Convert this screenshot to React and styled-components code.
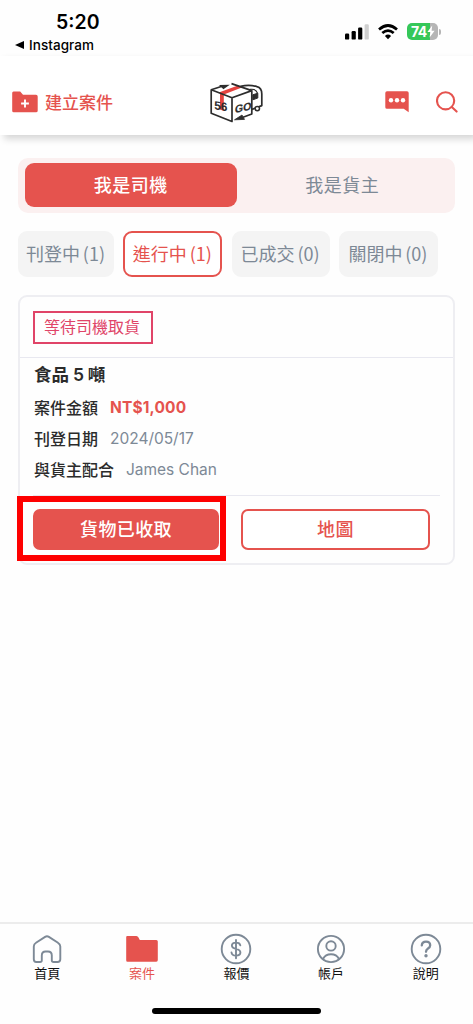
import React from 'react';
import styled, { createGlobalStyle } from 'styled-components';

const RED = '#e5534e';
const GREY = '#7d8996';

const tabs = [
  { label: '首頁', icon: 'home' },
  { label: '案件', icon: 'folder', active: true },
  { label: '報價', icon: 'dollar' },
  { label: '帳戶', icon: 'user' },
  { label: '說明', icon: 'help' },
];

const filters = [
  { label: '刊登中 (1)', width: 96 },
  { label: '進行中 (1)', width: 99, active: true },
  { label: '已成交 (0)', width: 98 },
  { label: '關閉中 (0)', width: 99 },
];

const details = [
  { label: '案件金額', value: 'NT$1,000', strong: true },
  { label: '刊登日期', value: '2024/05/17' },
  { label: '與貨主配合', value: 'James Chan' },
];

const Logo = () => (
  <svg width="74" height="60" viewBox="0 0 74 60" fill="none" stroke="#2d2d2d" strokeWidth="1.7" strokeLinejoin="round">
    <path d="M18.8 20.6 38 13.6 42.5 15.2 23.8 22.4V39L20 37.4V21.2Z" fill="#e5433f" stroke="none" />
    <path d="M11.2 17.8 32 25.8V49.5L11.2 41.2ZM32 25.8 51.8 18.6V42L43 45.3M11.2 17.8 22 14.2M31.5 11.6 51.8 18.6" />
    <path d="M19 13 29.8 12.7 23.4 17.2Z" fill="#2d2d2d" stroke="none" />
    <path d="M34.5 47.8 42 43 44.5 47.4Z" fill="#2d2d2d" strokeWidth="0.8" />
    <path d="M40.5 14.4Q49 12.2 57 14.6 61.8 15.8 61.8 22V33.6L52 37.4" />
    <path d="M50 17.4Q56 16.4 57.6 21.4" strokeWidth="1.2" />
    <path d="M52.8 22.8 57.8 21.2V26L52.8 27.8Z" fill="#2d2d2d" strokeWidth="1" />
    <circle cx="57.3" cy="36.6" r="2.2" fill="#fff" strokeWidth="1.5" />
    <text transform="matrix(1 .16 0 1 14.2 37.2)" fontFamily="Liberation Sans, sans-serif" fontSize="12" fontWeight="700" fill="#2d2d2d" stroke="none">56</text>
    <text transform="matrix(1 -.2 -.12 1 34.6 41)" fontFamily="Liberation Sans, sans-serif" fontSize="11" fontWeight="700" fill="#2d2d2d" stroke="#2d2d2d" strokeWidth=".2" textLength="16.5" lengthAdjust="spacingAndGlyphs">GO</text>
  </svg>
);

const FolderPlus = () => (
  <svg width="26" height="22" viewBox="0 0 26 22">
    <path d="M1.5.5H8.2L11 3.8H24Q25.7 3.8 25.7 5.5V19.8Q25.7 21.3 24 21.3H1.7Q.2 21.3.2 19.8V2Q.2.5 1.5.5Z" fill={RED} />
    <path d="M13 8.6V16.4M9.1 12.5H16.9" stroke="#fff" strokeWidth="1.9" />
  </svg>
);

const ChatIcon = () => (
  <svg width="24" height="22" viewBox="0 0 24 22">
    <path d="M2 .3H22Q23.7.3 23.7 2V21.3L18.7 17.8H2Q.3 17.8.3 16.2V2Q.3.3 2 .3Z" fill={RED} />
    <circle cx="6" cy="9.3" r="2.2" fill="#fff" />
    <circle cx="12" cy="9.3" r="2.2" fill="#fff" />
    <circle cx="18" cy="9.3" r="2.2" fill="#fff" />
  </svg>
);

const SearchIcon = () => (
  <svg width="22" height="22" viewBox="0 0 22 22" fill="none" stroke={RED} strokeWidth="2.1" strokeLinecap="round">
    <circle cx="9.6" cy="9.8" r="8.6" />
    <path d="M15.8 16 20.6 20.6" />
  </svg>
);

const SignalIcon = () => (
  <svg width="24" height="16" viewBox="0 0 24 16">
    <rect x="0" y="9.6" width="4.2" height="6" rx="1.2" />
    <rect x="6.6" y="7" width="4.2" height="8.6" rx="1.2" />
    <rect x="13.1" y="3.6" width="4.2" height="12" rx="1.2" />
    <rect x="19.6" y=".2" width="4.2" height="15.4" rx="1.2" fill="#cfcfcf" />
  </svg>
);

const WifiIcon = () => (
  <svg width="20" height="16" viewBox="0 0 20 16" fill="none" stroke="#000" strokeWidth="2.7">
    <path d="M1 5.5Q10-2.5 19 5.5" />
    <path d="M4.3 9.1Q10 4 15.7 9.1" />
    <path d="M10 15.2 6.9 12Q10 9.2 13.1 12Z" fill="#000" stroke="none" />
  </svg>
);

const BoltIcon = () => (
  <svg width="8" height="13" viewBox="0 0 8 13">
    <path d="M5.2.6.4 7.1H3.4L2.6 12.4 7.6 5.7H4.6Z" fill="#fff" />
  </svg>
);

const TabIcon = ({ name }) => {
  const line = { fill: 'none', stroke: GREY, strokeWidth: 1.9, strokeLinecap: 'round', strokeLinejoin: 'round' };
  return (
    <svg width="34" height="32" viewBox="0 0 34 32">
      {name === 'home' && (
        <path {...line} d="M6.2 29H10Q11.8 29 11.8 27.2V22.6Q11.8 18.5 15.6 18.5H18Q21.8 18.5 21.8 22.6V27.2Q21.8 29 23.6 29H27.6Q30.3 29 30.3 26.3V13.6Q30.3 11.1 28 9.8L18.9 3.9Q17 2.7 15.1 3.9L6 9.8Q3.8 11.1 3.8 13.6V26.3Q3.8 29 6.2 29Z" />
      )}
      {name === 'folder' && (
        <path fill={RED} d="M2.2 3H11.4Q12.8 3 13.5 4.5L14.8 7.1H31.3Q32.8 7.1 32.8 8.6V27.1Q32.8 28.7 31.3 28.7H2.5Q1.2 28.7 1.2 27.2V4.1Q1.2 3 2.2 3Z" />
      )}
      {name === 'dollar' && (
        <g {...line}>
          <circle cx="17" cy="16" r="14.3" />
          <path d="M17 7V25.2M21.3 12.3Q20.8 9.6 17 9.6 12.9 9.6 12.9 12.6 12.9 15.1 17 15.9 21.4 16.8 21.4 19.5 21.4 22.6 17 22.6 12.9 22.6 12.5 19.5" />
        </g>
      )}
      {name === 'user' && (
        <g {...line}>
          <circle cx="17" cy="16" r="13.1" />
          <circle cx="17" cy="12.9" r="4.7" />
          <path d="M9 26Q11.4 21.3 17 21.3T25 26" />
        </g>
      )}
      {name === 'help' && (
        <g {...line}>
          <circle cx="17" cy="16" r="14.3" />
          <path strokeWidth="2.3" d="M12.8 12.3Q13.1 8.7 17 8.7 21.2 8.7 21.2 12.3 21.2 14.2 19 15.5 17 16.8 17 18.8" />
          <circle cx="17" cy="22.8" r="1.7" fill={GREY} stroke="none" />
        </g>
      )}
    </svg>
  );
};

const App = () => (
  <Screen lang="zh-Hant">
    <GlobalStyle />
    <StatusBar>
      <Clock>
        <Time>5:20</Time>
        <BackApp><BackArrow />Instagram</BackApp>
      </Clock>
      <StatusIcons>
        <SignalIcon />
        <WifiIcon />
        <BatteryWrap>
          <Battery>74<BoltIcon /></Battery>
          <BatteryTip />
        </BatteryWrap>
      </StatusIcons>
    </StatusBar>

    <Header>
      <CreateButton><FolderPlus /><CreateLabel>建立案件</CreateLabel></CreateButton>
      <Logo />
      <HeaderActions>
        <ChatIcon />
        <SearchIcon />
      </HeaderActions>
    </Header>

    <Main>
      <RoleSwitch>
        <Role $active>我是司機</Role>
        <Role>我是貨主</Role>
      </RoleSwitch>

      <Filters>
        {filters.map((item) => (
          <Filter key={item.label} $active={item.active} $width={item.width}>{item.label}</Filter>
        ))}
      </Filters>

      <Card>
        <CardHead>
          <Tag>等待司機取貨</Tag>
        </CardHead>
        <CardBody>
          <Title>食品 5 噸</Title>
          {details.map((row) => (
            <Row key={row.label}>
              <Label>{row.label}</Label>
              <Value $strong={row.strong}>{row.value}</Value>
            </Row>
          ))}
        </CardBody>
        <CardActions>
          <Action $primary>貨物已收取</Action>
          <Action>地圖</Action>
          <Highlight />
        </CardActions>
      </Card>
    </Main>

    <TabBar>
      {tabs.map((tab) => (
        <Tab key={tab.label} $active={tab.active}>
          <TabIcon name={tab.icon} />
          {tab.label}
        </Tab>
      ))}
    </TabBar>
    <HomeArea><HomeIndicator /></HomeArea>
  </Screen>
);

const GlobalStyle = createGlobalStyle`
  * { box-sizing: border-box; }

  body {
    margin: 0;
    background: #fff;
  }

  svg { display: block; flex: none; }
`;

const Screen = styled.div`
  display: flex;
  flex-direction: column;
  width: 473px;
  height: 1024px;
  overflow: hidden;
  background: #fefefe;
  font-family: Inter, 'Noto Sans CJK TC', sans-serif;
  white-space: nowrap;
`;

const StatusBar = styled.div`
  display: flex;
  justify-content: space-between;
  height: 56px;
  padding: 11px 32px 0 15px;
`;

const Clock = styled.div`
  display: flex;
  flex-direction: column;
`;

const Time = styled.div`
  padding-left: 41px;
  font-size: 19.5px;
  font-weight: 600;
  line-height: 23px;
`;

const BackApp = styled.div`
  display: flex;
  align-items: center;
  gap: 5px;
  font-size: 13.5px;
  font-weight: 500;
  line-height: 22px;
  letter-spacing: 0.05px;
`;

const BackArrow = styled.span`
  border: solid transparent;
  border-width: 4.5px 9px 4.5px 0;
  border-right-color: #000;
`;

const StatusIcons = styled.div`
  display: flex;
  align-items: center;
  gap: 9px;
  height: 41px;
`;

const BatteryWrap = styled.div`
  display: flex;
  align-items: center;
  gap: 1px;
`;

const Battery = styled.div`
  display: flex;
  align-items: center;
  gap: 1px;
  width: 31px;
  height: 17px;
  padding-left: 4px;
  border-radius: 5px;
  background: linear-gradient(90deg, #35c759 0 23px, #b5b5b5 23px);
  color: #fff;
  font-size: 14px;
  font-weight: 700;
  letter-spacing: -0.7px;
`;

const BatteryTip = styled.span`
  width: 2px;
  height: 6px;
  border-radius: 0 2px 2px 0;
  background: #b5b5b5;
`;

const Header = styled.header`
  display: grid;
  grid-template-columns: 188px 74px 1fr;
  align-items: center;
  height: 79px;
  padding: 13px 15px 0 12px;
  background: #fff;
  box-shadow: 4px 4px 7px rgba(0, 0, 0, 0.16);
`;

const CreateButton = styled.div`
  display: flex;
  align-items: center;
  gap: 7px;
  color: ${RED};
`;

const CreateLabel = styled.span`
  padding-bottom: 2px;
  font-size: 17px;
  font-weight: 500;
`;

const HeaderActions = styled.div`
  display: flex;
  justify-content: flex-end;
  gap: 27px;
`;

const Main = styled.main`
  flex: 1;
  padding: 23px 18px 0;
`;

const RoleSwitch = styled.div`
  display: flex;
  align-items: center;
  width: 437px;
  height: 55px;
  padding: 0 7px 1px;
  border-radius: 10px;
  background: #fbf0f0;
`;

const Role = styled.div`
  flex: 1;
  height: 44px;
  border-radius: 9px;
  background: ${props => props.$active ? RED : 'transparent'};
  color: ${props => props.$active ? '#fff' : GREY};
  font-size: 18px;
  font-weight: ${props => props.$active ? 500 : 400};
  line-height: 45px;
  letter-spacing: 0.5px;
  text-align: center;
`;

const Filters = styled.div`
  display: flex;
  gap: 9.3px;
  margin-top: 18px;
`;

const Filter = styled.div`
  display: flex;
  align-items: center;
  justify-content: center;
  width: ${props => props.$width}px;
  height: 46px;
  padding: 0 1px 2px 0;
  border: 2px solid ${props => props.$active ? RED : '#f4f4f4'};
  border-radius: 9px;
  background: ${props => props.$active ? '#fff' : '#f4f4f4'};
  color: ${props => props.$active ? RED : GREY};
  font-family: 'Noto Sans CJK TC', sans-serif;
  font-size: 18px;
  word-spacing: -1.2px;
`;

const Card = styled.section`
  display: flex;
  flex-direction: column;
  width: 437px;
  height: 270px;
  margin-top: 18px;
  border: 2px solid #eeeef2;
  border-radius: 9px;
`;

const CardHead = styled.div`
  display: flex;
  align-items: center;
  height: 61px;
  padding-left: 13px;
  border-bottom: 1px solid #e8e8f0;
`;

const Tag = styled.span`
  width: 120px;
  height: 33px;
  padding-right: 2px;
  border: 2px solid #e04468;
  color: #e04468;
  font-size: 16px;
  line-height: 28px;
  text-align: center;
`;

const CardBody = styled.div`
  height: 138px;
  margin: 0 13px;
  padding-left: 1px;
  border-bottom: 1px solid #e8e8f0;
  color: #2b2b2b;
`;

const Title = styled.div`
  height: 34px;
  font-size: 17.5px;
  font-weight: 600;
  line-height: 34px;
  word-spacing: -0.5px;
`;

const Row = styled.div`
  display: flex;
  gap: 12px;
  height: 31px;
  line-height: 32px;
`;

const Label = styled.span`
  font-size: 16px;
  font-weight: 500;
`;

const Value = styled.span`
  color: ${props => props.$strong ? RED : GREY};
  font-size: 15.5px;
  font-weight: ${props => props.$strong ? 700 : 400};
  letter-spacing: ${props => props.$strong ? '0.15px' : '-0.02px'};
`;

const CardActions = styled.div`
  position: relative;
  display: grid;
  grid-template-columns: 186px 189px;
  gap: 22px;
  padding: 13px 13px 0;
`;

const Action = styled.div`
  height: 41px;
  border: 2px solid ${RED};
  border-radius: 7px;
  background: ${props => props.$primary ? RED : '#fff'};
  color: ${props => props.$primary ? '#fff' : RED};
  font-size: 18px;
  font-weight: 500;
  line-height: 38px;
  letter-spacing: 0.4px;
  text-align: center;
`;

// marker drawn over the primary action
const Highlight = styled.div`
  position: absolute;
  top: 0;
  left: -3px;
  width: 209px;
  height: 65px;
  border: 6px solid #fe0000;
`;

const TabBar = styled.nav`
  display: flex;
  justify-content: space-around;
  height: 72px;
  border-top: 2px solid #ececec;
  padding-top: 9px;
`;

const Tab = styled.div`
  display: flex;
  flex-direction: column;
  align-items: center;
  width: 94px;
  color: ${props => props.$active ? RED : '#111'};
  font-size: 13px;
  line-height: 16px;
`;

const HomeArea = styled.div`
  display: flex;
  justify-content: center;
  height: 30px;
  padding-top: 14px;
`;

const HomeIndicator = styled.div`
  width: 169px;
  height: 6px;
  border-radius: 3px;
  background: #000;
`;

export default App;
